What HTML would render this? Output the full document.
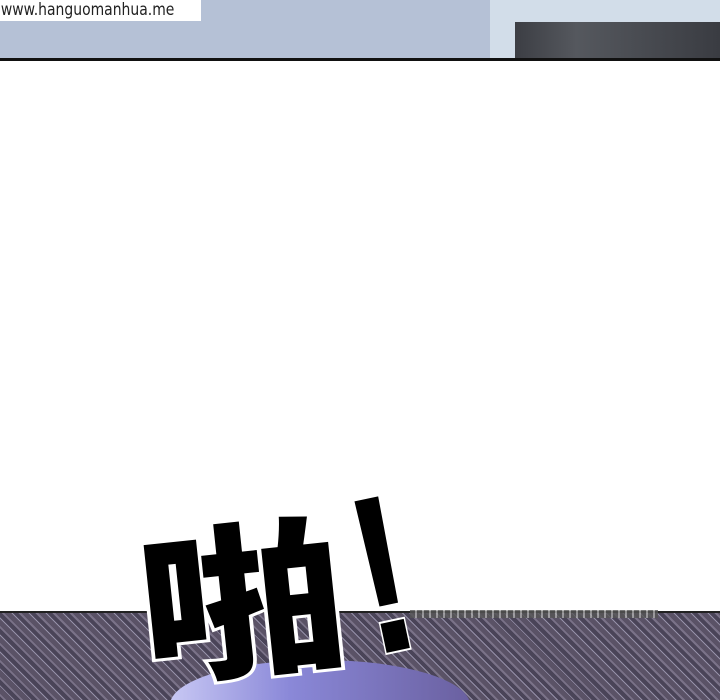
<!DOCTYPE html>
<html><head><meta charset="utf-8"><style>
html,body{margin:0;width:720px;height:700px;overflow:hidden}
body{background:#fff;position:relative;font-family:"Liberation Sans",sans-serif}
.wrap{position:absolute;left:0;top:0;width:720px;height:700px;overflow:hidden}
.top{position:absolute;left:0;top:0;width:720px;height:58px;background:#b5c1d6;border-bottom:3px solid #111}
.top .r{position:absolute;left:490px;top:0;width:230px;height:58px;background:#d2dde9}
.top .d{position:absolute;left:515px;top:22px;width:205px;height:36px;background:linear-gradient(90deg,#3c3e44,#55585e 30%,#3a3c42)}
.wm{position:absolute;left:0;top:0;width:201px;height:21px;background:#fff;overflow:hidden}
.wm span{display:block;font-family:"DejaVu Sans",sans-serif;font-size:17px;line-height:21px;color:#222;transform:scaleX(0.82);transform-origin:0 0;white-space:nowrap;padding-left:1px}
.clip{position:absolute;left:0;top:611px;width:720px;height:89px;overflow:hidden;border-top:2px solid #222;
background:repeating-linear-gradient(45deg,#4a4458 0 4px,#7a7288 4px 6px,#5a5266 6px 11px,#9590a8 11px 12px)}
.blob{position:absolute;left:170px;top:47px;width:300px;height:90px;border-radius:50%;background:linear-gradient(90deg,#c8c8f4,#8a88d8 40%,#6a60a0);}
.noise{position:absolute;left:410px;top:610px;width:248px;height:8px;background:repeating-linear-gradient(90deg,#555 0 5px,#aaa 5px 7px);opacity:.8}
.pa{position:absolute;left:130px;top:520px;font-family:"Noto Sans CJK SC",sans-serif;font-weight:900;font-size:165px;line-height:1;color:#000;-webkit-text-stroke:6px #fff;paint-order:stroke fill;transform:rotate(-6deg) scaleX(1.25);transform-origin:0 0}
.ex{position:absolute;left:345px;top:462px;font-family:"Liberation Sans",sans-serif;font-weight:bold;font-size:225px;line-height:1;color:#000;transform:rotate(-12deg) scaleX(0.75);-webkit-text-stroke:4px #fff;paint-order:stroke fill}
</style></head><body><div class="wrap">
<div class="top"><div class="r"></div><div class="d"></div></div>
<div class="wm"><span>www.hanguomanhua.me</span></div>
<div class="clip"><div class="blob"></div></div>
<div class="noise"></div>
<div class="pa">啪</div>
<div class="ex">!</div>
</div></body></html>
